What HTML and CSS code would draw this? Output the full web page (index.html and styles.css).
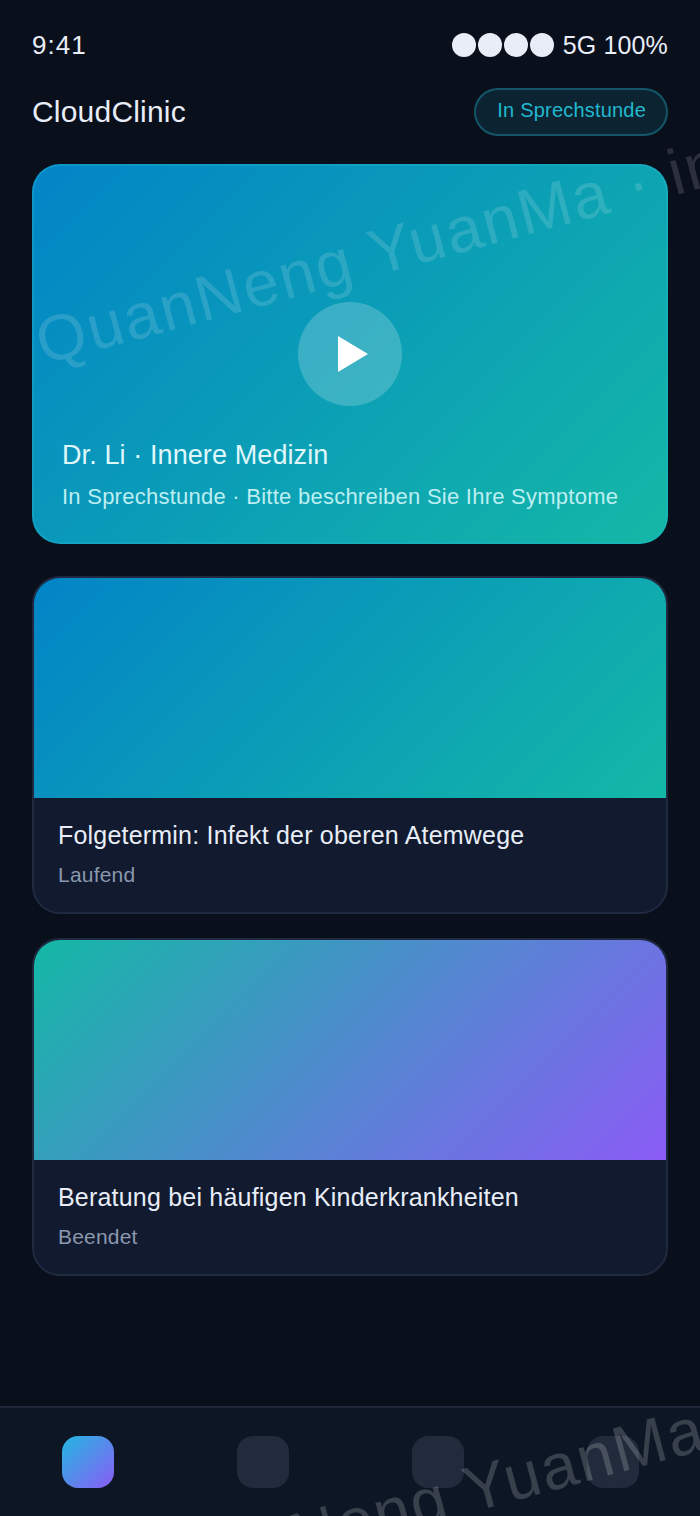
FILE: index.html
```html
<!DOCTYPE html>
<html lang="de">
<head>
  <meta charset="UTF-8" />
  <title>CloudClinic</title>
  <link rel="stylesheet" href="styles.css">
</head>
<body>
  <div class="app">
    <div class="status-bar">
      <span class="time">9:41</span>
      <div class="status-right">
        <div class="dots"><i></i><i></i><i></i><i></i></div>
        <span>5G 100%</span>
      </div>
    </div>

    <header class="top">
      <h1>CloudClinic</h1>
      <span class="badge">In Sprechstunde</span>
    </header>

    <main class="content">
      <section class="feature">
        <div class="play">
          <svg width="30" height="36" viewBox="0 0 30 36"><polygon points="0,0 30,18 0,36" fill="#fff"/></svg>
        </div>
        <div class="feature-info">
          <h2>Dr. Li · Innere Medizin</h2>
          <p>In Sprechstunde · Bitte beschreiben Sie Ihre Symptome</p>
        </div>
      </section>

      <section class="card">
        <div class="thumb thumb-blue"></div>
        <div class="card-body">
          <h3>Folgetermin: Infekt der oberen Atemwege</h3>
          <p>Laufend</p>
        </div>
      </section>

      <section class="card">
        <div class="thumb thumb-violet"></div>
        <div class="card-body">
          <h3>Beratung bei häufigen Kinderkrankheiten</h3>
          <p>Beendet</p>
        </div>
      </section>
    </main>

    <nav class="tabbar">
      <span class="tab active"></span>
      <span class="tab"></span>
      <span class="tab"></span>
      <span class="tab"></span>
    </nav>

    <div class="watermark wm-one">QuanNeng YuanMa · in</div>
    <div class="watermark wm-two">QuanNeng YuanMa</div>
  </div>
</body>
</html>
```

FILE: styles.css
```css
* {
  box-sizing: border-box;
}

body {
  margin: 0;
  background: #0a0f1c;
  font-family: "Liberation Sans", Arial, sans-serif;
  color: #e6ebf5;
}

.app {
  position: relative;
  width: 700px;
  height: 1516px;
  overflow: hidden;
  display: flex;
  flex-direction: column;
}

.status-bar {
  display: flex;
  justify-content: space-between;
  align-items: center;
  height: 24px;
  margin: 33px 32px 0;
  font-size: 25px;
  letter-spacing: 0.15px;
  color: #e8edf7;
}

.status-bar .time {
  font-size: 26px;
  letter-spacing: 1px;
}

.status-right {
  display: flex;
  align-items: center;
  gap: 9px;
}

.dots {
  display: flex;
  gap: 2px;
}

.dots i {
  width: 24px;
  height: 24px;
  border-radius: 50%;
  background: #e8edf7;
}

.top {
  display: flex;
  justify-content: space-between;
  align-items: center;
  margin: 31px 32px 28px;
}

.top h1 {
  margin: 0;
  font-size: 30px;
  font-weight: 400;
  letter-spacing: 0.2px;
  color: #e8edf7;
}

.badge {
  display: flex;
  align-items: center;
  height: 48px;
  padding: 0 20px 3px 21px;
  border: 2px solid rgba(34, 184, 207, 0.35);
  border-radius: 24px;
  background: rgba(34, 184, 207, 0.12);
  color: #22b8cf;
  font-size: 20px;
  letter-spacing: 0.2px;
}

.content {
  display: flex;
  flex-direction: column;
  gap: 24px;
  padding: 0 32px;
}

.feature {
  display: flex;
  flex-direction: column;
  align-items: center;
  height: 380px;
  margin-bottom: 8px;
  padding: 136px 28px 0;
  border: 2px solid rgba(34, 184, 207, 0.35);
  border-radius: 28px;
  background: linear-gradient(135deg, #0284c7, #14b8a6);
  background-origin: border-box;
}

.play {
  display: flex;
  align-items: center;
  justify-content: center;
  flex-shrink: 0;
  width: 104px;
  height: 104px;
  padding-left: 6px;
  border-radius: 50%;
  background: rgba(255, 255, 255, 0.2);
}

.feature-info {
  width: 100%;
  margin-top: 34px;
}

.feature-info h2 {
  margin: 0 0 13px;
  font-size: 27px;
  font-weight: 400;
  letter-spacing: 0.1px;
  color: #e0f7fa;
}

.feature-info p {
  margin: 0;
  font-size: 22px;
  letter-spacing: 0.25px;
  color: #bdeef2;
}

.card {
  height: 338px;
  border: 2px solid #1f2a40;
  border-radius: 28px;
  background: #111a2e;
  overflow: hidden;
}

.thumb {
  height: 220px;
}

.thumb-blue {
  background: linear-gradient(135deg, #0284c7, #14b8a6);
}

.thumb-violet {
  background: linear-gradient(135deg, #14b8a6, #8b5cf6);
}

.card-body {
  padding: 23px 24px 0;
}

.card-body h3 {
  margin: 0 0 13px;
  font-size: 25px;
  font-weight: 400;
  letter-spacing: 0.2px;
  color: #e8edf7;
}

.card-body p {
  margin: 0;
  font-size: 21px;
  letter-spacing: 0.2px;
  color: #8b98ae;
}

.tabbar {
  display: flex;
  justify-content: space-around;
  margin-top: auto;
  padding: 28px 0;
  border-top: 2px solid #1f2838;
  background: #0d1625;
}

.tab {
  width: 52px;
  height: 52px;
  border-radius: 16px;
  background: #222b3b;
}

.tab.active {
  background: linear-gradient(135deg, #22b8e0, #8b5cf6);
}

.watermark {
  position: absolute;
  white-space: nowrap;
  font-size: 64px;
  letter-spacing: 2px;
  color: rgba(255, 255, 255, 0.14);
  transform: rotate(-15deg);
  transform-origin: left bottom;
  pointer-events: none;
}

.wm-one {
  left: 47px;
  top: 305px;
}

.wm-two {
  left: 142px;
  top: 1542px;
  color: rgba(255, 255, 255, 0.18);
}
```
